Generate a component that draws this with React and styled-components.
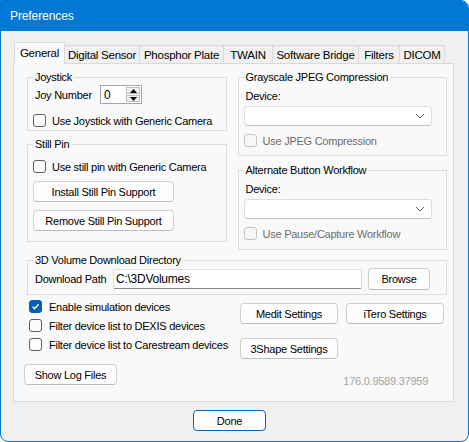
import React from 'react';
import styled, { createGlobalStyle } from 'styled-components';

const GlobalStyle = createGlobalStyle`
	html, body {
		margin: 0;
		padding: 0;
		background: #ffffff;
	}
	body {
		font-family: "Liberation Sans", Arial, sans-serif;
		font-size: 11px;
		letter-spacing: -0.25px;
		color: #000000;
	}
	* {
		box-sizing: border-box;
	}
`;

const tabs = [
	{ label: 'General', width: 51 },
	{ label: 'Digital Sensor', width: 76 },
	{ label: 'Phosphor Plate', width: 85 },
	{ label: 'TWAIN', width: 50 },
	{ label: 'Software Bridge', width: 87 },
	{ label: 'Filters', width: 42 },
	{ label: 'DICOM', width: 46 },
];

function CheckBox({ checked, disabled }) {
	return (
		<Box checked={checked} disabled={disabled}>
			{checked && (
				<svg width='9' height='9' viewBox='0 0 9 9'>
					<path d='M1.5 4.6 L3.6 6.7 L7.6 2.3' fill='none' stroke='#ffffff' strokeWidth='1.3' />
				</svg>
			)}
		</Box>
	);
}

function Check({ children, checked, disabled, tight }) {
	return (
		<CheckRow tight={tight} disabled={disabled}>
			<CheckBox checked={checked} disabled={disabled} />
			<span>{children}</span>
		</CheckRow>
	);
}

function Combo() {
	return (
		<Select>
			<svg width='10' height='6' viewBox='0 0 10 6'>
				<path d='M1 1 L5 5 L9 1' fill='none' stroke='#5f5f5f' strokeWidth='1' />
			</svg>
		</Select>
	);
}

function App() {
	return (
		<>
			<GlobalStyle />
			<Window>
				<TitleBar>Preferences</TitleBar>
				<Body>
					<TabStrip>
						{tabs.map((t, i) => (
							<Tab key={t.label} active={i === 0} width={t.width}>
								{t.label}
							</Tab>
						))}
					</TabStrip>
					<TabPanel>
						<TopRow>
							<Column width={200} gap={6}>
								<Group>
									<Legend>Joystick</Legend>
									<JoyRow>
										<FieldLabel width={67}>Joy Number</FieldLabel>
										<Spinner>
											<SpinValue>0</SpinValue>
											<SpinButtons>
												<SpinButton>
													<svg width='7' height='4' viewBox='0 0 7 4'>
														<path d='M0 4 L3.5 0 L7 4 Z' fill='#000' />
													</svg>
												</SpinButton>
												<SpinButton>
													<svg width='7' height='4' viewBox='0 0 7 4'>
														<path d='M0 0 L3.5 4 L7 0 Z' fill='#000' />
													</svg>
												</SpinButton>
											</SpinButtons>
										</Spinner>
									</JoyRow>
									<Spacer h={9} />
									<Check>Use Joystick with Generic Camera</Check>
									<Spacer h={2} />
								</Group>
								<Group>
									<Legend>Still Pin</Legend>
									<Spacer h={8} />
									<Check>Use still pin with Generic Camera</Check>
									<Spacer h={7} />
									<Button width={141}>Install Still Pin Support</Button>
									<Spacer h={8} />
									<Button width={141}>Remove Still Pin Support</Button>
									<Spacer h={10} />
								</Group>
							</Column>
							<Column width={210} gap={7}>
								<Group>
									<Legend>Grayscale JPEG Compression</Legend>
									<FieldLabel top={5}>Device:</FieldLabel>
									<Spacer h={3} />
									<Combo />
									<Spacer h={7} />
									<Check disabled>Use JPEG Compression</Check>
									<Spacer h={7} />
								</Group>
								<Group>
									<Legend>Alternate Button Workflow</Legend>
									<FieldLabel top={5}>Device:</FieldLabel>
									<Spacer h={3} />
									<Combo />
									<Spacer h={7} />
									<Check disabled>Use Pause/Capture Workflow</Check>
									<Spacer h={8} />
								</Group>
							</Column>
						</TopRow>
						<Group wide>
							<Legend>3D Volume Download Directory</Legend>
							<PathRow>
								<FieldLabel width={80}>Download Path</FieldLabel>
								<TextBox>C:\3DVolumes</TextBox>
								<Button width={62} height={22}>
									Browse
								</Button>
							</PathRow>
							<Spacer h={4} />
						</Group>
						<OptionsRow>
							<CheckList>
								<Check checked tight>
									Enable simulation devices
								</Check>
								<Check tight>Filter device list to DEXIS devices</Check>
								<Check tight>Filter device list to Carestream devices</Check>
							</CheckList>
							<SettingsGrid>
								<Button>Medit Settings</Button>
								<Button>iTero Settings</Button>
								<Button>3Shape Settings</Button>
							</SettingsGrid>
						</OptionsRow>
						<FooterRow>
							<Button width={93}>Show Log Files</Button>
							<Version>176.0.9589.37959</Version>
						</FooterRow>
					</TabPanel>
					<DialogButtons>
						<Button width={73} primary>
							Done
						</Button>
					</DialogButtons>
				</Body>
			</Window>
		</>
	);
}

const Window = styled.div`
	width: 469px;
	height: 442px;
	display: flex;
	flex-direction: column;
	background: #f0f0f0;
	border: 1px solid #0078d4;
	border-radius: 0 8px 8px 8px;
	overflow: hidden;
`;

const TitleBar = styled.div`
	height: 30px;
	flex-shrink: 0;
	background: #0078d4;
	color: #ffffff;
	font-size: 12px;
	letter-spacing: -0.1px;
	line-height: 31px;
	padding-left: 9px;
`;

const Body = styled.div`
	display: flex;
	flex-direction: column;
	padding: 11px 0 0 12px;
`;

const TabStrip = styled.div`
	display: flex;
	align-items: flex-end;
	height: 21px;
	padding-left: 1px;
`;

const Tab = styled.div`
	width: ${(p) => p.width}px;
	height: ${(p) => (p.active ? 22 : 18)}px;
	margin-bottom: ${(p) => (p.active ? -1 : 0)}px;
	margin-left: ${(p) => (p.active ? 0 : -1)}px;
	position: relative;
	z-index: ${(p) => (p.active ? 2 : 1)};
	display: flex;
	align-items: center;
	justify-content: center;
	padding-bottom: ${(p) => (p.active ? 2 : 0)}px;
	background: ${(p) => (p.active ? '#f9f9f9' : '#f0f0f0')};
	border: 1px solid #d9d9d9;
	border-bottom: none;
	white-space: nowrap;
	font-size: 11.5px;
	&:first-child {
		margin-left: 0;
	}
`;

const TabPanel = styled.div`
	width: 441px;
	height: 339px;
	display: flex;
	flex-direction: column;
	background: #f9f9f9;
	border: 1px solid #d9d9d9;
	padding: 6px 6px 0 13px;
`;

const TopRow = styled.div`
	display: flex;
	align-items: flex-start;
	gap: 11px;
`;

const Column = styled.div`
	width: ${(p) => p.width}px;
	display: flex;
	flex-direction: column;
	gap: ${(p) => p.gap}px;
`;

const Group = styled.fieldset`
	margin: ${(p) => (p.wide ? '3px 0 0 0' : '0')};
	width: ${(p) => (p.wide ? '420px' : 'auto')};
	min-width: 0;
	padding: 0 5px;
	border: 1px solid #dcdcdc;
	display: flex;
	flex-direction: column;
	align-items: flex-start;
`;

const Legend = styled.legend`
	padding: 0 2px;
	line-height: 15px;
	height: 14px;
	color: #000000;
`;

const Spacer = styled.div`
	height: ${(p) => p.h}px;
	flex-shrink: 0;
`;

const FieldLabel = styled.div`
	width: ${(p) => (p.width ? `${p.width}px` : 'auto')};
	margin-top: ${(p) => p.top || 0}px;
	padding-left: 2px;
	line-height: 14px;
	flex-shrink: 0;
	white-space: nowrap;
`;

const JoyRow = styled.div`
	display: flex;
	align-items: center;
	margin-top: 1px;
	height: 19px;
`;

const Spinner = styled.div`
	width: 42px;
	height: 19px;
	display: flex;
	align-items: center;
	justify-content: space-between;
	background: #ffffff;
	border: 1px solid #a6a6a6;
	padding: 1px;
`;

const SpinValue = styled.span`
	padding-left: 2px;
	font-size: 12px;
	color: #000000;
`;

const SpinButtons = styled.div`
	width: 14px;
	height: 15px;
	display: flex;
	flex-direction: column;
	gap: 1px;
`;

const SpinButton = styled.div`
	flex: 1;
	display: flex;
	align-items: center;
	justify-content: center;
	background: #efefef;
	border: 1px solid #bdbdbd;
`;

const CheckRow = styled.label`
	display: flex;
	align-items: center;
	gap: ${(p) => (p.tight ? 7 : 6)}px;
	height: ${(p) => (p.tight ? 19 : 15)}px;
	color: ${(p) => (p.disabled ? '#6d6d6d' : '#000000')};
	white-space: nowrap;
`;

const Box = styled.span`
	width: 13px;
	height: 13px;
	flex-shrink: 0;
	display: flex;
	align-items: center;
	justify-content: center;
	border-radius: 3px;
	border: 1px solid ${(p) => (p.checked ? '#005fb8' : p.disabled ? '#c4c4c4' : '#5e5e5e')};
	background: ${(p) => (p.checked ? '#005fb8' : p.disabled ? '#f7f7f7' : '#fcfcfc')};
`;

const Button = styled.div`
	width: ${(p) => (p.width ? `${p.width}px` : 'auto')};
	height: ${(p) => p.height || 21}px;
	display: flex;
	align-items: center;
	justify-content: center;
	flex-shrink: 0;
	background: #fdfdfd;
	border: 1px solid ${(p) => (p.primary ? '#0067c0' : '#d0d0d0')};
	border-bottom-color: ${(p) => (p.primary ? '#0067c0' : '#bdbdbd')};
	border-radius: 4px;
	white-space: nowrap;
	color: #000000;
`;

const Select = styled.div`
	width: 188px;
	height: 20px;
	display: flex;
	align-items: center;
	justify-content: flex-end;
	padding-right: 6px;
	background: #ffffff;
	border: 1px solid #dddddd;
	border-bottom-color: #c2c2c2;
	border-radius: 4px;
`;

const PathRow = styled.div`
	display: flex;
	align-items: center;
	gap: 6px;
	height: 22px;
	margin-top: 1px;
`;

const TextBox = styled.div`
	width: 249px;
	height: 20px;
	display: flex;
	align-items: center;
	padding-left: 2px;
	margin-left: -6px;
	background: #ffffff;
	border: 1px solid #dddddd;
	border-bottom-color: #8a8a8a;
	border-radius: 2px;
	font-size: 12px;
`;

const OptionsRow = styled.div`
	display: flex;
	margin-top: 2px;
`;

const CheckList = styled.div`
	width: 211px;
	margin-left: 2px;
	display: flex;
	flex-direction: column;
`;

const SettingsGrid = styled.div`
	display: grid;
	grid-template-columns: 98px 98px;
	grid-auto-rows: 21px;
	column-gap: 8px;
	row-gap: 14px;
	margin-top: 6px;
`;

const FooterRow = styled.div`
	display: flex;
	justify-content: space-between;
	align-items: flex-start;
	margin: 5px 19px 0 -3px;
`;

const Version = styled.div`
	margin-top: 10px;
	color: #a3a3a3;
	line-height: 14px;
`;

const DialogButtons = styled.div`
	display: flex;
	justify-content: center;
	padding-right: 22px;
	margin-top: 8px;
`;

export default App;
